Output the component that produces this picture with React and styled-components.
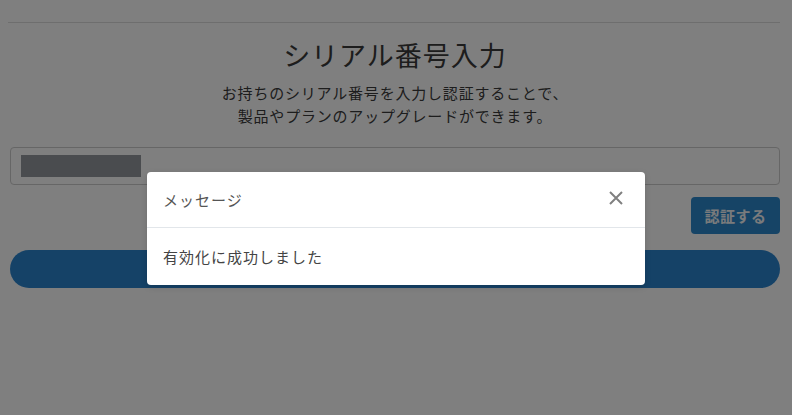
import React from "react";
import styled, { createGlobalStyle } from "styled-components";

const Global = createGlobalStyle`
  html, body { margin: 0; padding: 0; background: #ffffff; }
  body {
    font-family: "Noto Sans CJK JP", "Noto Sans", "Liberation Sans", sans-serif;
    color: #333;
  }
  #root { width: 792px; height: 415px; position: relative; overflow: hidden; }
`;

const Page = styled.div`
  padding: 22px 12px 0 10px;
  display: flex;
  flex-direction: column;
`;

const Divider = styled.hr`
  margin: 0 0 0 -2px;
  border: 0;
  border-top: 1px solid #dcdcdc;
`;

const Title = styled.h1`
  margin: 14px 0 0;
  text-align: center;
  font-size: 27px;
  font-weight: 400;
  letter-spacing: 1px;
  line-height: 35px;
  color: #3a3a3a;
`;

const Lead = styled.p`
  margin: 9px 0 0;
  text-align: center;
  font-size: 15px;
  letter-spacing: 0.8px;
  line-height: 23px;
  color: #3a3a3a;
`;

const Field = styled.div`
  margin-top: 20px;
  height: 38px;
  box-sizing: border-box;
  border: 1px solid #cccccc;
  border-radius: 4px;
  display: flex;
  align-items: center;
  padding: 0 10px;
`;

const Masked = styled.div`
  width: 120px;
  height: 22px;
  background: #94999f;
`;

const ActionRow = styled.div`
  margin-top: 12px;
  display: flex;
  justify-content: flex-end;
`;

const SubmitButton = styled.button`
  width: 89px;
  height: 37px;
  border: 0;
  border-radius: 4px;
  background: #2c88cc;
  color: #f4f6f8;
  font-family: inherit;
  font-size: 15px;
  font-weight: 700;
  letter-spacing: 0.5px;
  padding: 0;
`;

const WideBar = styled.div`
  margin-top: 16px;
  height: 38px;
  border-radius: 19px;
  background: #2a85cf;
`;

const Backdrop = styled.div`
  position: absolute;
  inset: 0;
  background: rgba(0, 0, 0, 0.5);
  display: flex;
  justify-content: center;
  align-items: flex-start;
  padding-top: 172px;
`;

const Dialog = styled.div`
  width: 498px;
  background: #ffffff;
  border-radius: 4px;
  box-shadow: 0 2px 6px rgba(0, 0, 0, 0.15);
`;

const DialogHeader = styled.div`
  height: 56px;
  box-sizing: border-box;
  padding: 0 21px 0 16px;
  display: flex;
  align-items: center;
  justify-content: space-between;
  border-bottom: 1px solid #e2e6ea;
`;

const DialogTitle = styled.span`
  font-size: 15px;
  letter-spacing: 1px;
  color: #555;
`;

const CloseButton = styled.button`
  border: 0;
  background: none;
  padding: 0;
  width: 16px;
  height: 16px;
  display: flex;
  align-items: center;
  justify-content: center;
  margin-top: -3px;
`;

const DialogBody = styled.div`
  height: 57px;
  box-sizing: border-box;
  padding: 0 16px;
  display: flex;
  align-items: center;
  font-size: 15px;
  letter-spacing: 1px;
  color: #444;
`;

export default function App() {
  return (
    <>
      <Global />
      <Page>
        <Divider />
        <Title>シリアル番号入力</Title>
        <Lead>
          お持ちのシリアル番号を入力し認証することで、
          <br />
          製品やプランのアップグレードができます。
        </Lead>
        <Field>
          <Masked />
        </Field>
        <ActionRow>
          <SubmitButton>認証する</SubmitButton>
        </ActionRow>
        <WideBar />
      </Page>
      <Backdrop>
        <Dialog>
          <DialogHeader>
            <DialogTitle>メッセージ</DialogTitle>
            <CloseButton aria-label="close">
              <svg width="14" height="14" viewBox="0 0 14 14">
                <path d="M1 1 L13 13 M13 1 L1 13" stroke="#808080" strokeWidth="2" strokeLinecap="butt" />
              </svg>
            </CloseButton>
          </DialogHeader>
          <DialogBody>有効化に成功しました</DialogBody>
        </Dialog>
      </Backdrop>
    </>
  );
}
